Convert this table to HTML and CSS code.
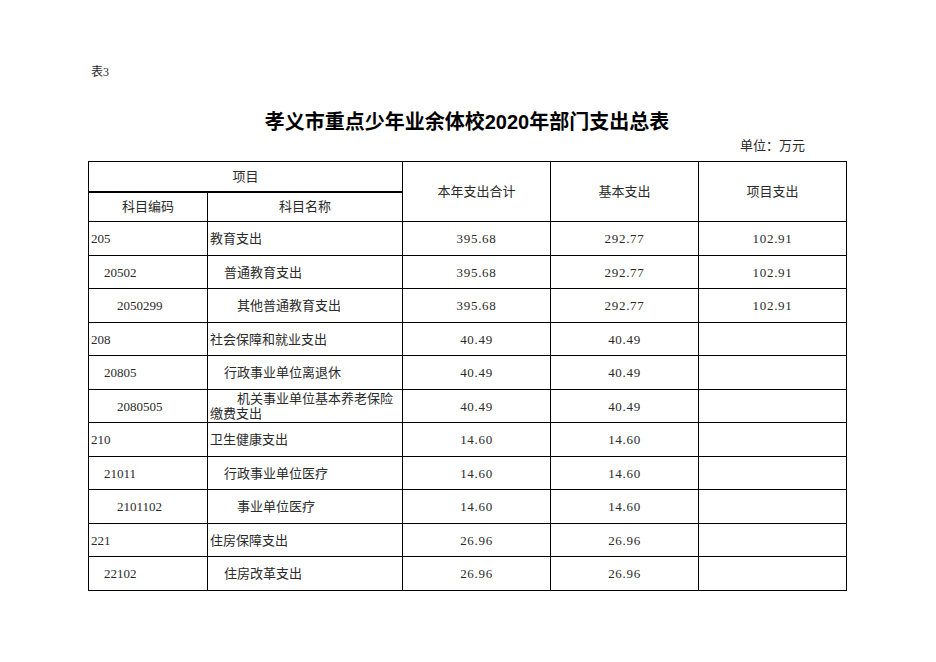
FILE: index.html
```html
<!DOCTYPE html>
<html lang="zh-CN">
<head>
<meta charset="utf-8">
<title>孝义市重点少年业余体校2020年部门支出总表</title>
<link rel="stylesheet" href="styles.css">
</head>
<body>
<div class="page">
  <div class="tag">表3</div>
  <h1 class="title">孝义市重点少年业余体校2020年部门支出总表</h1>
  <div class="unit">单位：万元</div>
  <table class="sheet">
    <colgroup>
      <col class="c-code">
      <col class="c-name">
      <col class="c-num">
      <col class="c-num">
      <col class="c-num">
    </colgroup>
    <thead>
      <tr class="h1">
        <th colspan="2" class="thick">项目</th>
        <th rowspan="2">本年支出合计</th>
        <th rowspan="2">基本支出</th>
        <th rowspan="2">项目支出</th>
      </tr>
      <tr class="h2">
        <th>科目编码</th>
        <th>科目名称</th>
      </tr>
    </thead>
    <tbody>
      <tr class="r34"><td class="code l1">205</td><td class="name l1">教育支出</td><td class="num">395.68</td><td class="num">292.77</td><td class="num">102.91</td></tr>
      <tr class="r33"><td class="code l2">20502</td><td class="name l2">普通教育支出</td><td class="num">395.68</td><td class="num">292.77</td><td class="num">102.91</td></tr>
      <tr class="r34"><td class="code l3">2050299</td><td class="name l3">其他普通教育支出</td><td class="num">395.68</td><td class="num">292.77</td><td class="num">102.91</td></tr>
      <tr class="r33"><td class="code l1">208</td><td class="name l1">社会保障和就业支出</td><td class="num">40.49</td><td class="num">40.49</td><td class="num"></td></tr>
      <tr class="r34"><td class="code l2">20805</td><td class="name l2">行政事业单位离退休</td><td class="num">40.49</td><td class="num">40.49</td><td class="num"></td></tr>
      <tr class="r33"><td class="code l3">2080505</td><td class="name l3 wrap">机关事业单位基本养老保险缴费支出</td><td class="num">40.49</td><td class="num">40.49</td><td class="num"></td></tr>
      <tr class="r34"><td class="code l1">210</td><td class="name l1">卫生健康支出</td><td class="num">14.60</td><td class="num">14.60</td><td class="num"></td></tr>
      <tr class="r33"><td class="code l2">21011</td><td class="name l2">行政事业单位医疗</td><td class="num">14.60</td><td class="num">14.60</td><td class="num"></td></tr>
      <tr class="r34"><td class="code l3">2101102</td><td class="name l3">事业单位医疗</td><td class="num">14.60</td><td class="num">14.60</td><td class="num"></td></tr>
      <tr class="r33"><td class="code l1">221</td><td class="name l1">住房保障支出</td><td class="num">26.96</td><td class="num">26.96</td><td class="num"></td></tr>
      <tr class="r34"><td class="code l2">22102</td><td class="name l2">住房改革支出</td><td class="num">26.96</td><td class="num">26.96</td><td class="num"></td></tr>
    </tbody>
  </table>
</div>
</body>
</html>
```
FILE: styles.css
```css
html, body {
  margin: 0;
  padding: 0;
  background: #fff;
}

body {
  font-family: "Liberation Serif", "Noto Sans CJK SC", serif;
  color: #2a2a2a;
  font-size: 13px;
}

.page {
  width: 758px;
  padding-left: 88px;
}

.tag {
  margin-top: 64px;
  padding-left: 3px;
  font-size: 12px;
  line-height: 16px;
}

.title {
  margin: 28px 0 0 0;
  text-align: center;
  font-family: "Liberation Sans", "Noto Sans CJK SC", sans-serif;
  font-weight: bold;
  font-size: 20px;
  line-height: 28px;
  color: #000;
}

.unit {
  margin-top: 2px;
  padding-right: 41px;
  text-align: right;
  font-size: 13px;
  line-height: 16px;
}

.sheet {
  margin-top: 7px;
  width: 758px;
  border-collapse: collapse;
  table-layout: fixed;
}

.c-code { width: 119px; }
.c-name { width: 195px; }
.c-num { width: 148px; }

.sheet th,
.sheet td {
  border: 1px solid #000;
  padding: 0;
  font-weight: normal;
  font-size: 13px;
  line-height: 15px;
  vertical-align: middle;
}

.sheet th {
  text-align: center;
}

.sheet th.thick {
  border-bottom: 2px solid #000;
}

.h1 { height: 30px; }
.h2 { height: 30px; }

.r34 { height: 34px; }
.r33 { height: 33px; }

.code { text-align: left; }
.name { text-align: left; }
.num {
  text-align: center;
  letter-spacing: 0.7px;
}

.code.l1 { padding-left: 2px; }
.code.l2 { padding-left: 15px; }
.code.l3 { padding-left: 28px; }

.name.l1 { padding-left: 2px; }
.name.l2 { padding-left: 2px; text-indent: 14px; }
.name.l3 { padding-left: 2px; text-indent: 27px; }
```
